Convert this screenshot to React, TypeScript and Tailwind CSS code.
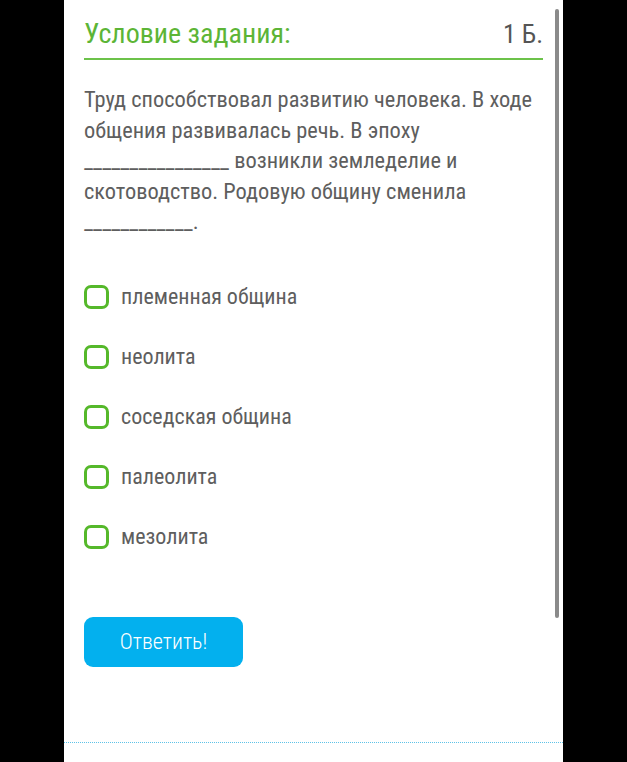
import React from "react";

const options = ["племенная община", "неолита", "соседская община", "палеолита", "мезолита"];

export default function App() {
  return (
    <div className="w-[627px] h-[762px] bg-black flex overflow-hidden font-['Roboto_Condensed','Roboto',sans-serif]">
      <div className="ml-[64px] w-[499px] h-full bg-white relative flex flex-col">
        <div className="absolute left-[491px] top-[9px] w-[4px] h-[609px] bg-[#8a8a8a] rounded-sm" />
        <div className="px-[20px] pt-[16px]">
          <div className="flex items-end justify-between border-b-2 border-[#6cc24a] pb-[6px]">
            <span className="text-[28px] leading-[36px] text-[#5cb536]">Условие задания:</span>
            <span className="text-[26px] leading-[36px] text-[#555555]">1 Б.</span>
          </div>
        </div>
        <div className="pl-[20px] pr-[20px] pt-[24px] text-[22.4px] leading-[30.5px] text-[#5e5e5e]">
          Труд способствовал развитию человека. В ходе общения развивалась речь. В эпоху ________________ возникли земледелие и скотоводство. Родовую общину сменила ____________.
        </div>
        <div className="px-[20px] pt-[48px] flex flex-col gap-[36px]">
          {options.map((o) => (
            <div key={o} className="flex items-center gap-[12px] h-[24px]">
              <div className="w-[25px] h-[24px] rounded-[7px] border-[3px] border-[#55b82a]" />
              <span className="text-[22px] text-[#5e5e5e]">{o}</span>
            </div>
          ))}
        </div>
        <div className="px-[20px] pt-[68px]">
          <button className="w-[159px] h-[50px] rounded-[9px] bg-[#03b0ee] text-white text-[22px] font-light">Ответить!</button>
        </div>
        <div className="mt-auto mb-[19px] border-t border-dotted border-[#5ec3e8]" />
      </div>
    </div>
  );
}
